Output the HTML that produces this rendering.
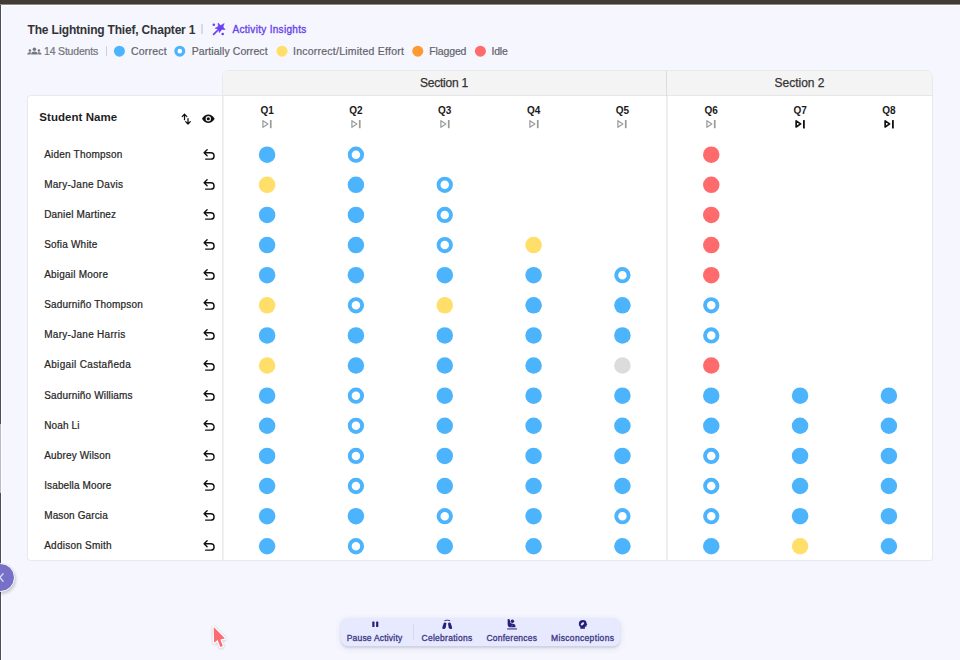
<!DOCTYPE html><html><head><meta charset="utf-8"><style>
*{margin:0;padding:0;box-sizing:border-box}
html,body{width:960px;height:660px;overflow:hidden;background:#f5f6fe;font-family:"Liberation Sans",sans-serif}
body{position:relative}
.abs{position:absolute}
.t{position:absolute;white-space:nowrap;line-height:1}
.sep{position:absolute;width:1px;background:#d4d4da}
.dot{position:absolute;border-radius:50%}
.lg{font-size:10.5px;color:#62626a;-webkit-text-stroke:0.2px #62626a}
.qh{font-size:10px;font-weight:bold;color:#1a1a1a;width:40px;text-align:center}
.name{font-size:10px;color:#262626;-webkit-text-stroke:0.22px #262626}
.sec{font-size:12px;color:#333;width:200px;text-align:center;-webkit-text-stroke:0.25px #333}
.tb{font-size:8.5px;font-weight:normal;color:#3a3783;-webkit-text-stroke:0.3px #3a3783}
</style></head><body>
<div class="abs" style="left:0;top:0;width:960px;height:4px;background:#423a34"></div>
<div class="abs" style="left:0;top:4px;width:960px;height:1px;background:#8d8885"></div>
<div class="abs" style="left:0;top:5px;width:960px;height:1px;background:#fff"></div>
<div class="abs" style="left:0;top:5px;width:1px;height:655px;background:#4a4f59"></div>
<div class="abs" style="left:1px;top:6px;width:1px;height:654px;background:#fff"></div>
<div class="abs" style="left:0;top:423.6px;width:1px;height:69.6px;background:#b9b9c1"></div>
<div class="t" style="left:27.6px;top:24.34px;font-size:12px;font-weight:bold;color:#333338;letter-spacing:-0.19px">The Lightning Thief, Chapter 1</div>
<div class="sep" style="left:201.2px;top:24.3px;width:1.7px;height:9.3px;background:#dadae2"></div>
<svg class="abs" style="left:205px;top:18px" width="30" height="22" viewBox="205 18 30 22"><path d="M213.6 34.4 L218.5 29.5" stroke="#6b3ff6" stroke-width="1.7" stroke-linecap="round"/><path d="M218 23 L220.6 25.4 L224.2 23.5 L223 26.9 L225.2 29.5 L221.7 29.5 L219.3 32.7 L218.7 29.2 L215 28.3 L218.3 26.5 Z" fill="#6b3ff6" stroke="#6b3ff6" stroke-width="0.5" stroke-linejoin="round"/><circle cx="213.8" cy="24.8" r="1.3" fill="#6b3ff6"/><circle cx="222.7" cy="34" r="1.3" fill="#6b3ff6"/></svg>
<div class="t" style="left:232.5px;top:25.04px;font-size:10px;font-weight:normal;color:#6a44ec;-webkit-text-stroke:0.35px #6a44ec;letter-spacing:0.3px">Activity Insights</div>
<svg class="abs" style="left:26px;top:46px" width="17" height="10" viewBox="26 46 17 10"><circle cx="34.4" cy="49.2" r="1.75" fill="#767680"/><path d="M31 54.6 C31 52.4 32.4 51.4 34.4 51.4 C36.4 51.4 37.8 52.4 37.8 54.6 Z" fill="#767680"/><circle cx="29.9" cy="50.5" r="1.25" fill="#767680"/><path d="M27.3 54.6 C27.3 53.1 28.3 52.3 29.8 52.3 C30.4 52.3 30.8 52.4 31.1 52.6 C30.7 53.2 30.5 53.8 30.5 54.6 Z" fill="#767680"/><circle cx="38.9" cy="50.5" r="1.25" fill="#767680"/><path d="M41.5 54.6 C41.5 53.1 40.5 52.3 39 52.3 C38.4 52.3 38 52.4 37.7 52.6 C38.1 53.2 38.3 53.8 38.3 54.6 Z" fill="#767680"/></svg>
<div class="t lg" style="left:44px;top:45.81px;letter-spacing:-0.18px;color:#74747c;-webkit-text-stroke:0.2px #74747c">14 Students</div>
<div class="sep" style="left:106px;top:46.2px;height:9.7px;background:#cfcfd6"></div>
<div class="t lg" style="left:130.9px;top:45.81px;letter-spacing:0.216px">Correct</div>
<div class="t lg" style="left:191.7px;top:45.81px;letter-spacing:0.077px">Partially Correct</div>
<div class="t lg" style="left:293px;top:45.81px;letter-spacing:0.239px">Incorrect/Limited Effort</div>
<div class="t lg" style="left:429.3px;top:45.81px;letter-spacing:-0.134px">Flagged</div>
<div class="t lg" style="left:491.4px;top:45.81px;letter-spacing:-0.163px">Idle</div>
<svg class="abs" style="left:100px;top:40px" width="400" height="22" viewBox="100 40 400 22"><circle cx="119.39999999999999" cy="51.15" r="5.5" fill="#4cb4fd"/><circle cx="179.8" cy="51.15" r="3.9" fill="#fff" stroke="#4cb4fd" stroke-width="3.2"/><circle cx="282.0" cy="51.15" r="5.5" fill="#ffde69"/><circle cx="417.8" cy="51.15" r="5.5" fill="#fd9a33"/><circle cx="480.40000000000003" cy="51.15" r="5.5" fill="#ff6b6c"/></svg>
<div class="abs" style="left:27px;top:95px;width:196px;height:466px;background:#fff;border:1px solid #e9e9ec;border-right:none;border-radius:4px 0 0 4px"></div>
<div class="abs" style="left:222px;top:70px;width:711px;height:491px;background:#fff;border:1px solid #e9e9ec;border-radius:7px 7px 3px 0;overflow:hidden"><div class="abs" style="left:0;top:0;width:709px;height:25px;background:#f4f4f4;border-bottom:1px solid #e6e6e8"></div><div class="abs" style="left:443px;top:0;width:1.4px;height:25px;background:#dcdcdf"></div><div class="abs" style="left:443px;top:25px;width:2px;height:464px;background:#efeff0"></div><div class="abs" style="left:0;top:25px;width:1px;height:464px;background:#f2f2f3"></div></div>
<div class="t sec" style="left:344px;top:76.84px;letter-spacing:-0.25px">Section 1</div>
<div class="t sec" style="left:699.5px;top:76.84px">Section 2</div>
<div class="t" style="left:39.3px;top:111.97px;font-size:11.5px;font-weight:bold;color:#1f1f1f;letter-spacing:0.05px">Student Name</div>
<svg class="abs" style="left:178px;top:109px" width="16" height="18" viewBox="178 109 16 18"><path d="M184.5 119.7 V114.2 M182.2 116.6 L184.5 114.1 L186.8 116.6" stroke="#111" stroke-width="1.25" fill="none" stroke-linecap="round" stroke-linejoin="round"/><path d="M188 118.5 V124 M185.7 121.6 L188 124.1 L190.3 121.6" stroke="#111" stroke-width="1.25" fill="none" stroke-linecap="round" stroke-linejoin="round"/></svg>
<svg class="abs" style="left:200px;top:112px" width="17" height="13" viewBox="200 112 17 13"><path d="M202 118.7 C203.8 115.5 206 114.4 208.3 114.4 C210.6 114.4 212.8 115.5 214.7 118.7 C212.8 121.9 210.6 123 208.3 123 C206 123 203.8 121.9 202 118.7 Z" fill="#111"/><circle cx="208.3" cy="118.7" r="2.7" fill="#f0f0f0"/><circle cx="208.3" cy="118.7" r="1.55" fill="#111"/></svg>
<div class="t qh" style="left:247.10000000000002px;top:105.94px">Q1</div>
<svg class="abs" style="left:260.10px;top:117px" width="14" height="14" viewBox="260.10 117 14 14"><path d="M263.00 120.7 L268.00 124 L263.00 127.3 Z" fill="none" stroke="#9b9b9b" stroke-width="1.25" stroke-linejoin="round"/><rect x="270.00" y="120" width="1.7" height="8.2" fill="#9b9b9b"/></svg>
<div class="t qh" style="left:335.93px;top:105.94px">Q2</div>
<svg class="abs" style="left:348.93px;top:117px" width="14" height="14" viewBox="348.93 117 14 14"><path d="M351.83 120.7 L356.83 124 L351.83 127.3 Z" fill="none" stroke="#9b9b9b" stroke-width="1.25" stroke-linejoin="round"/><rect x="358.83" y="120" width="1.7" height="8.2" fill="#9b9b9b"/></svg>
<div class="t qh" style="left:424.76px;top:105.94px">Q3</div>
<svg class="abs" style="left:437.76px;top:117px" width="14" height="14" viewBox="437.76 117 14 14"><path d="M440.66 120.7 L445.66 124 L440.66 127.3 Z" fill="none" stroke="#9b9b9b" stroke-width="1.25" stroke-linejoin="round"/><rect x="447.66" y="120" width="1.7" height="8.2" fill="#9b9b9b"/></svg>
<div class="t qh" style="left:513.59px;top:105.94px">Q4</div>
<svg class="abs" style="left:526.59px;top:117px" width="14" height="14" viewBox="526.59 117 14 14"><path d="M529.49 120.7 L534.49 124 L529.49 127.3 Z" fill="none" stroke="#9b9b9b" stroke-width="1.25" stroke-linejoin="round"/><rect x="536.49" y="120" width="1.7" height="8.2" fill="#9b9b9b"/></svg>
<div class="t qh" style="left:602.4200000000001px;top:105.94px">Q5</div>
<svg class="abs" style="left:615.42px;top:117px" width="14" height="14" viewBox="615.42 117 14 14"><path d="M618.32 120.7 L623.32 124 L618.32 127.3 Z" fill="none" stroke="#9b9b9b" stroke-width="1.25" stroke-linejoin="round"/><rect x="625.32" y="120" width="1.7" height="8.2" fill="#9b9b9b"/></svg>
<div class="t qh" style="left:691.25px;top:105.94px">Q6</div>
<svg class="abs" style="left:704.25px;top:117px" width="14" height="14" viewBox="704.25 117 14 14"><path d="M707.15 120.7 L712.15 124 L707.15 127.3 Z" fill="none" stroke="#9b9b9b" stroke-width="1.25" stroke-linejoin="round"/><rect x="714.15" y="120" width="1.7" height="8.2" fill="#9b9b9b"/></svg>
<div class="t qh" style="left:780.08px;top:105.94px">Q7</div>
<svg class="abs" style="left:793.08px;top:117px" width="14" height="14" viewBox="793.08 117 14 14"><path d="M796.23 120.85 L800.68 123.9 L796.23 126.95 Z" fill="none" stroke="#111" stroke-width="1.7" stroke-linejoin="round"/><rect x="803.08" y="120" width="1.8" height="8.4" rx="0.5" fill="#111"/></svg>
<div class="t qh" style="left:868.91px;top:105.94px">Q8</div>
<svg class="abs" style="left:881.91px;top:117px" width="14" height="14" viewBox="881.91 117 14 14"><path d="M885.06 120.85 L889.51 123.9 L885.06 126.95 Z" fill="none" stroke="#111" stroke-width="1.7" stroke-linejoin="round"/><rect x="891.91" y="120" width="1.8" height="8.4" rx="0.5" fill="#111"/></svg>
<div class="t name" style="left:44.2px;top:149.63px;letter-spacing:0.209px">Aiden Thompson</div>
<svg class="abs" style="left:200px;top:145.70px" width="18" height="18" viewBox="200 145.70 18 18"><path d="M207.1 149.50 L204.1 152.45 L207.1 155.50 M204.3 152.45 H210.9 A3.17 3.17 0 0 1 210.9 158.80 H205.6" stroke="#111" stroke-width="1.4" fill="none" stroke-linecap="round" stroke-linejoin="round"/></svg>
<div class="t name" style="left:44.2px;top:179.75px;letter-spacing:0.266px">Mary-Jane Davis</div>
<svg class="abs" style="left:200px;top:175.82px" width="18" height="18" viewBox="200 175.82 18 18"><path d="M207.1 179.62 L204.1 182.57 L207.1 185.62 M204.3 182.57 H210.9 A3.17 3.17 0 0 1 210.9 188.92 H205.6" stroke="#111" stroke-width="1.4" fill="none" stroke-linecap="round" stroke-linejoin="round"/></svg>
<div class="t name" style="left:44.2px;top:209.88px;letter-spacing:0.174px">Daniel Martinez</div>
<svg class="abs" style="left:200px;top:205.94px" width="18" height="18" viewBox="200 205.94 18 18"><path d="M207.1 209.74 L204.1 212.69 L207.1 215.74 M204.3 212.69 H210.9 A3.17 3.17 0 0 1 210.9 219.04 H205.6" stroke="#111" stroke-width="1.4" fill="none" stroke-linecap="round" stroke-linejoin="round"/></svg>
<div class="t name" style="left:44.2px;top:240.0px;letter-spacing:0.203px">Sofia White</div>
<svg class="abs" style="left:200px;top:236.06px" width="18" height="18" viewBox="200 236.06 18 18"><path d="M207.1 239.86 L204.1 242.81 L207.1 245.86 M204.3 242.81 H210.9 A3.17 3.17 0 0 1 210.9 249.16 H205.6" stroke="#111" stroke-width="1.4" fill="none" stroke-linecap="round" stroke-linejoin="round"/></svg>
<div class="t name" style="left:44.2px;top:270.12px;letter-spacing:0.218px">Abigail Moore</div>
<svg class="abs" style="left:200px;top:266.18px" width="18" height="18" viewBox="200 266.18 18 18"><path d="M207.1 269.98 L204.1 272.93 L207.1 275.98 M204.3 272.93 H210.9 A3.17 3.17 0 0 1 210.9 279.28 H205.6" stroke="#111" stroke-width="1.4" fill="none" stroke-linecap="round" stroke-linejoin="round"/></svg>
<div class="t name" style="left:44.2px;top:300.23px;letter-spacing:0.191px">Sadurniño Thompson</div>
<svg class="abs" style="left:200px;top:296.30px" width="18" height="18" viewBox="200 296.30 18 18"><path d="M207.1 300.10 L204.1 303.05 L207.1 306.10 M204.3 303.05 H210.9 A3.17 3.17 0 0 1 210.9 309.40 H205.6" stroke="#111" stroke-width="1.4" fill="none" stroke-linecap="round" stroke-linejoin="round"/></svg>
<div class="t name" style="left:44.2px;top:330.35px;letter-spacing:0.288px">Mary-Jane Harris</div>
<svg class="abs" style="left:200px;top:326.42px" width="18" height="18" viewBox="200 326.42 18 18"><path d="M207.1 330.22 L204.1 333.17 L207.1 336.22 M204.3 333.17 H210.9 A3.17 3.17 0 0 1 210.9 339.52 H205.6" stroke="#111" stroke-width="1.4" fill="none" stroke-linecap="round" stroke-linejoin="round"/></svg>
<div class="t name" style="left:44.2px;top:360.47px;letter-spacing:0.337px">Abigail Castañeda</div>
<svg class="abs" style="left:200px;top:356.54px" width="18" height="18" viewBox="200 356.54 18 18"><path d="M207.1 360.34 L204.1 363.29 L207.1 366.34 M204.3 363.29 H210.9 A3.17 3.17 0 0 1 210.9 369.64 H205.6" stroke="#111" stroke-width="1.4" fill="none" stroke-linecap="round" stroke-linejoin="round"/></svg>
<div class="t name" style="left:44.2px;top:390.59px;letter-spacing:0.16px">Sadurniño Williams</div>
<svg class="abs" style="left:200px;top:386.66px" width="18" height="18" viewBox="200 386.66 18 18"><path d="M207.1 390.46 L204.1 393.41 L207.1 396.46 M204.3 393.41 H210.9 A3.17 3.17 0 0 1 210.9 399.76 H205.6" stroke="#111" stroke-width="1.4" fill="none" stroke-linecap="round" stroke-linejoin="round"/></svg>
<div class="t name" style="left:44.2px;top:420.71px;letter-spacing:0.14px">Noah Li</div>
<svg class="abs" style="left:200px;top:416.78px" width="18" height="18" viewBox="200 416.78 18 18"><path d="M207.1 420.58 L204.1 423.53 L207.1 426.58 M204.3 423.53 H210.9 A3.17 3.17 0 0 1 210.9 429.88 H205.6" stroke="#111" stroke-width="1.4" fill="none" stroke-linecap="round" stroke-linejoin="round"/></svg>
<div class="t name" style="left:44.2px;top:450.83px;letter-spacing:0.158px">Aubrey Wilson</div>
<svg class="abs" style="left:200px;top:446.90px" width="18" height="18" viewBox="200 446.90 18 18"><path d="M207.1 450.70 L204.1 453.65 L207.1 456.70 M204.3 453.65 H210.9 A3.17 3.17 0 0 1 210.9 460.00 H205.6" stroke="#111" stroke-width="1.4" fill="none" stroke-linecap="round" stroke-linejoin="round"/></svg>
<div class="t name" style="left:44.2px;top:480.95px;letter-spacing:0.12px">Isabella Moore</div>
<svg class="abs" style="left:200px;top:477.02px" width="18" height="18" viewBox="200 477.02 18 18"><path d="M207.1 480.82 L204.1 483.77 L207.1 486.82 M204.3 483.77 H210.9 A3.17 3.17 0 0 1 210.9 490.12 H205.6" stroke="#111" stroke-width="1.4" fill="none" stroke-linecap="round" stroke-linejoin="round"/></svg>
<div class="t name" style="left:44.2px;top:511.07px;letter-spacing:0.12px">Mason Garcia</div>
<svg class="abs" style="left:200px;top:507.14px" width="18" height="18" viewBox="200 507.14 18 18"><path d="M207.1 510.94 L204.1 513.89 L207.1 516.94 M204.3 513.89 H210.9 A3.17 3.17 0 0 1 210.9 520.24 H205.6" stroke="#111" stroke-width="1.4" fill="none" stroke-linecap="round" stroke-linejoin="round"/></svg>
<div class="t name" style="left:44.2px;top:541.19px;letter-spacing:0.248px">Addison Smith</div>
<svg class="abs" style="left:200px;top:537.26px" width="18" height="18" viewBox="200 537.26 18 18"><path d="M207.1 541.06 L204.1 544.01 L207.1 547.06 M204.3 544.01 H210.9 A3.17 3.17 0 0 1 210.9 550.36 H205.6" stroke="#111" stroke-width="1.4" fill="none" stroke-linecap="round" stroke-linejoin="round"/></svg>
<svg class="abs" style="left:0;top:0" width="960" height="660" viewBox="0 0 960 660"><circle cx="267.10" cy="154.70" r="8.25" fill="#4cb4fd"/><circle cx="355.93" cy="154.70" r="6.2" fill="#fff" stroke="#4cb4fd" stroke-width="3.9"/><circle cx="711.25" cy="154.70" r="8.25" fill="#ff6b6c"/><circle cx="267.10" cy="184.82" r="8.25" fill="#ffde69"/><circle cx="355.93" cy="184.82" r="8.25" fill="#4cb4fd"/><circle cx="444.76" cy="184.82" r="6.2" fill="#fff" stroke="#4cb4fd" stroke-width="3.9"/><circle cx="711.25" cy="184.82" r="8.25" fill="#ff6b6c"/><circle cx="267.10" cy="214.94" r="8.25" fill="#4cb4fd"/><circle cx="355.93" cy="214.94" r="8.25" fill="#4cb4fd"/><circle cx="444.76" cy="214.94" r="6.2" fill="#fff" stroke="#4cb4fd" stroke-width="3.9"/><circle cx="711.25" cy="214.94" r="8.25" fill="#ff6b6c"/><circle cx="267.10" cy="245.06" r="8.25" fill="#4cb4fd"/><circle cx="355.93" cy="245.06" r="8.25" fill="#4cb4fd"/><circle cx="444.76" cy="245.06" r="6.2" fill="#fff" stroke="#4cb4fd" stroke-width="3.9"/><circle cx="533.59" cy="245.06" r="8.25" fill="#ffde69"/><circle cx="711.25" cy="245.06" r="8.25" fill="#ff6b6c"/><circle cx="267.10" cy="275.18" r="8.25" fill="#4cb4fd"/><circle cx="355.93" cy="275.18" r="8.25" fill="#4cb4fd"/><circle cx="444.76" cy="275.18" r="8.25" fill="#4cb4fd"/><circle cx="533.59" cy="275.18" r="8.25" fill="#4cb4fd"/><circle cx="622.42" cy="275.18" r="6.2" fill="#fff" stroke="#4cb4fd" stroke-width="3.9"/><circle cx="711.25" cy="275.18" r="8.25" fill="#ff6b6c"/><circle cx="267.10" cy="305.30" r="8.25" fill="#ffde69"/><circle cx="355.93" cy="305.30" r="6.2" fill="#fff" stroke="#4cb4fd" stroke-width="3.9"/><circle cx="444.76" cy="305.30" r="8.25" fill="#ffde69"/><circle cx="533.59" cy="305.30" r="8.25" fill="#4cb4fd"/><circle cx="622.42" cy="305.30" r="8.25" fill="#4cb4fd"/><circle cx="711.25" cy="305.30" r="6.2" fill="#fff" stroke="#4cb4fd" stroke-width="3.9"/><circle cx="267.10" cy="335.42" r="8.25" fill="#4cb4fd"/><circle cx="355.93" cy="335.42" r="8.25" fill="#4cb4fd"/><circle cx="444.76" cy="335.42" r="8.25" fill="#4cb4fd"/><circle cx="533.59" cy="335.42" r="8.25" fill="#4cb4fd"/><circle cx="622.42" cy="335.42" r="8.25" fill="#4cb4fd"/><circle cx="711.25" cy="335.42" r="6.2" fill="#fff" stroke="#4cb4fd" stroke-width="3.9"/><circle cx="267.10" cy="365.54" r="8.25" fill="#ffde69"/><circle cx="355.93" cy="365.54" r="8.25" fill="#4cb4fd"/><circle cx="444.76" cy="365.54" r="8.25" fill="#4cb4fd"/><circle cx="533.59" cy="365.54" r="8.25" fill="#4cb4fd"/><circle cx="622.42" cy="365.54" r="8.25" fill="#dcdcdc"/><circle cx="711.25" cy="365.54" r="8.25" fill="#ff6b6c"/><circle cx="267.10" cy="395.66" r="8.25" fill="#4cb4fd"/><circle cx="355.93" cy="395.66" r="6.2" fill="#fff" stroke="#4cb4fd" stroke-width="3.9"/><circle cx="444.76" cy="395.66" r="8.25" fill="#4cb4fd"/><circle cx="533.59" cy="395.66" r="8.25" fill="#4cb4fd"/><circle cx="622.42" cy="395.66" r="8.25" fill="#4cb4fd"/><circle cx="711.25" cy="395.66" r="8.25" fill="#4cb4fd"/><circle cx="800.08" cy="395.66" r="8.25" fill="#4cb4fd"/><circle cx="888.91" cy="395.66" r="8.25" fill="#4cb4fd"/><circle cx="267.10" cy="425.78" r="8.25" fill="#4cb4fd"/><circle cx="355.93" cy="425.78" r="6.2" fill="#fff" stroke="#4cb4fd" stroke-width="3.9"/><circle cx="444.76" cy="425.78" r="8.25" fill="#4cb4fd"/><circle cx="533.59" cy="425.78" r="8.25" fill="#4cb4fd"/><circle cx="622.42" cy="425.78" r="8.25" fill="#4cb4fd"/><circle cx="711.25" cy="425.78" r="8.25" fill="#4cb4fd"/><circle cx="800.08" cy="425.78" r="8.25" fill="#4cb4fd"/><circle cx="888.91" cy="425.78" r="8.25" fill="#4cb4fd"/><circle cx="267.10" cy="455.90" r="8.25" fill="#4cb4fd"/><circle cx="355.93" cy="455.90" r="6.2" fill="#fff" stroke="#4cb4fd" stroke-width="3.9"/><circle cx="444.76" cy="455.90" r="8.25" fill="#4cb4fd"/><circle cx="533.59" cy="455.90" r="8.25" fill="#4cb4fd"/><circle cx="622.42" cy="455.90" r="8.25" fill="#4cb4fd"/><circle cx="711.25" cy="455.90" r="6.2" fill="#fff" stroke="#4cb4fd" stroke-width="3.9"/><circle cx="800.08" cy="455.90" r="8.25" fill="#4cb4fd"/><circle cx="888.91" cy="455.90" r="8.25" fill="#4cb4fd"/><circle cx="267.10" cy="486.02" r="8.25" fill="#4cb4fd"/><circle cx="355.93" cy="486.02" r="6.2" fill="#fff" stroke="#4cb4fd" stroke-width="3.9"/><circle cx="444.76" cy="486.02" r="8.25" fill="#4cb4fd"/><circle cx="533.59" cy="486.02" r="8.25" fill="#4cb4fd"/><circle cx="622.42" cy="486.02" r="8.25" fill="#4cb4fd"/><circle cx="711.25" cy="486.02" r="6.2" fill="#fff" stroke="#4cb4fd" stroke-width="3.9"/><circle cx="800.08" cy="486.02" r="8.25" fill="#4cb4fd"/><circle cx="888.91" cy="486.02" r="8.25" fill="#4cb4fd"/><circle cx="267.10" cy="516.14" r="8.25" fill="#4cb4fd"/><circle cx="355.93" cy="516.14" r="8.25" fill="#4cb4fd"/><circle cx="444.76" cy="516.14" r="6.2" fill="#fff" stroke="#4cb4fd" stroke-width="3.9"/><circle cx="533.59" cy="516.14" r="8.25" fill="#4cb4fd"/><circle cx="622.42" cy="516.14" r="6.2" fill="#fff" stroke="#4cb4fd" stroke-width="3.9"/><circle cx="711.25" cy="516.14" r="6.2" fill="#fff" stroke="#4cb4fd" stroke-width="3.9"/><circle cx="800.08" cy="516.14" r="8.25" fill="#4cb4fd"/><circle cx="888.91" cy="516.14" r="8.25" fill="#4cb4fd"/><circle cx="267.10" cy="546.26" r="8.25" fill="#4cb4fd"/><circle cx="355.93" cy="546.26" r="6.2" fill="#fff" stroke="#4cb4fd" stroke-width="3.9"/><circle cx="444.76" cy="546.26" r="8.25" fill="#4cb4fd"/><circle cx="533.59" cy="546.26" r="8.25" fill="#4cb4fd"/><circle cx="622.42" cy="546.26" r="8.25" fill="#4cb4fd"/><circle cx="711.25" cy="546.26" r="8.25" fill="#4cb4fd"/><circle cx="800.08" cy="546.26" r="8.25" fill="#ffde69"/><circle cx="888.91" cy="546.26" r="8.25" fill="#4cb4fd"/></svg>
<div class="dot" style="left:-14px;top:563px;width:29px;height:29px;background:#7670c9;border:1px solid #fff;box-shadow:1px 2px 3px rgba(0,0,0,0.18)"></div>
<svg class="abs" style="left:0;top:570px" width="6" height="16" viewBox="0 570 6 16"><path d="M3.1 573.8 L-0.2 577.5 L3.1 581.3" stroke="#e0dcf4" stroke-width="1.3" fill="none" stroke-linecap="round"/></svg>
<div class="abs" style="left:341px;top:618px;width:279px;height:28px;background:#e7e9fe;border-radius:7px;box-shadow:0 1.5px 2px rgba(40,40,80,0.10),0 2px 7px rgba(50,50,110,0.12)"></div>
<div class="sep" style="left:412.5px;top:624px;height:16px;background:#d8d9ee"></div>
<div class="t tb" style="left:346.7px;top:634.4px;letter-spacing:0.2px">Pause Activity</div>
<div class="t tb" style="left:421.5px;top:634.4px;letter-spacing:0.28px">Celebrations</div>
<div class="t tb" style="left:486.5px;top:634.4px;letter-spacing:0.23px">Conferences</div>
<div class="t tb" style="left:551px;top:634.4px;letter-spacing:0.34px">Misconceptions</div>
<svg class="abs" style="left:370px;top:619px" width="10" height="10" viewBox="370 619 10 10"><rect x="372.3" y="621.6" width="2.2" height="5.5" rx="0.6" fill="#25217a"/><rect x="376.1" y="621.6" width="2.2" height="5.5" rx="0.6" fill="#25217a"/></svg>
<svg class="abs" style="left:440px;top:618px" width="14" height="13" viewBox="440 618 14 13"><path d="M444.8 622.5 Q446.3 622.6 446.4 623.6 L445.7 627.8 Q445.4 628.9 444.1 628.9 L443.1 628.9 Q442.1 628.8 442.3 627.6 L443.6 623.4 Q443.9 622.5 444.8 622.5 Z" fill="#25217a"/><path d="M449.6 622.5 Q448.1 622.6 448 623.6 L448.7 627.8 Q449 628.9 450.3 628.9 L451.3 628.9 Q452.3 628.8 452.1 627.6 L450.8 623.4 Q450.5 622.5 449.6 622.5 Z" fill="#25217a"/><path d="M444.3 620.7 Q447.2 619.6 450.1 620.7" stroke="#25217a" stroke-width="0.9" fill="none"/></svg>
<svg class="abs" style="left:505px;top:617px" width="14" height="14" viewBox="505 617 14 14"><circle cx="512.4" cy="621.3" r="1.75" fill="#25217a"/><path d="M507.6 619.4 Q508.7 618.6 509.7 619.6 L510.5 623 Q511.6 623.6 513 623.8 Q515.5 624.2 515.6 626.3 Q515.6 627.2 514.6 627.2 L509.6 627.2 Q507.9 626.8 507.7 625 Z" fill="#25217a"/><path d="M510.8 626.6 L513 624.9" stroke="#8c89c4" stroke-width="0.5"/><rect x="507.1" y="628.2" width="9.9" height="1.4" fill="#5e5ba3"/></svg>
<svg class="abs" style="left:576px;top:618px" width="13" height="13" viewBox="576 618 13 13"><path d="M580.3 628.8 L580.3 627.1 Q578.8 625.9 578.8 623.9 Q578.8 619.9 583 619.9 Q586.5 619.9 586.6 623.3 L587.3 624.7 L586.5 625 L586.5 626.6 L584.9 626.7 L584.9 628.8 Z" fill="#25217a"/><ellipse cx="582.4" cy="623.8" rx="2.0" ry="1.15" transform="rotate(-40 582.4 623.8)" fill="#e7e9fe"/></svg>
<svg class="abs" style="left:205px;top:620px" width="26" height="32" viewBox="205 620 26 32"><defs><filter id="sh" x="-50%" y="-50%" width="200%" height="200%"><feDropShadow dx="0" dy="0.5" stdDeviation="0.8" flood-color="#334" flood-opacity="0.3"/></filter></defs><path d="M213.7 627.1 L214.1 642.8 L217.7 640 L220.3 646.9 L222.8 646 L220.4 639.5 L225 638.6 Z" fill="#fff" stroke="#fff" stroke-width="2.2" stroke-linejoin="round" filter="url(#sh)"/><path d="M213.7 627.1 L214.1 642.8 L217.7 640 L220.3 646.9 L222.8 646 L220.4 639.5 L225 638.6 Z" fill="#fd6b73"/></svg>
</body></html>
